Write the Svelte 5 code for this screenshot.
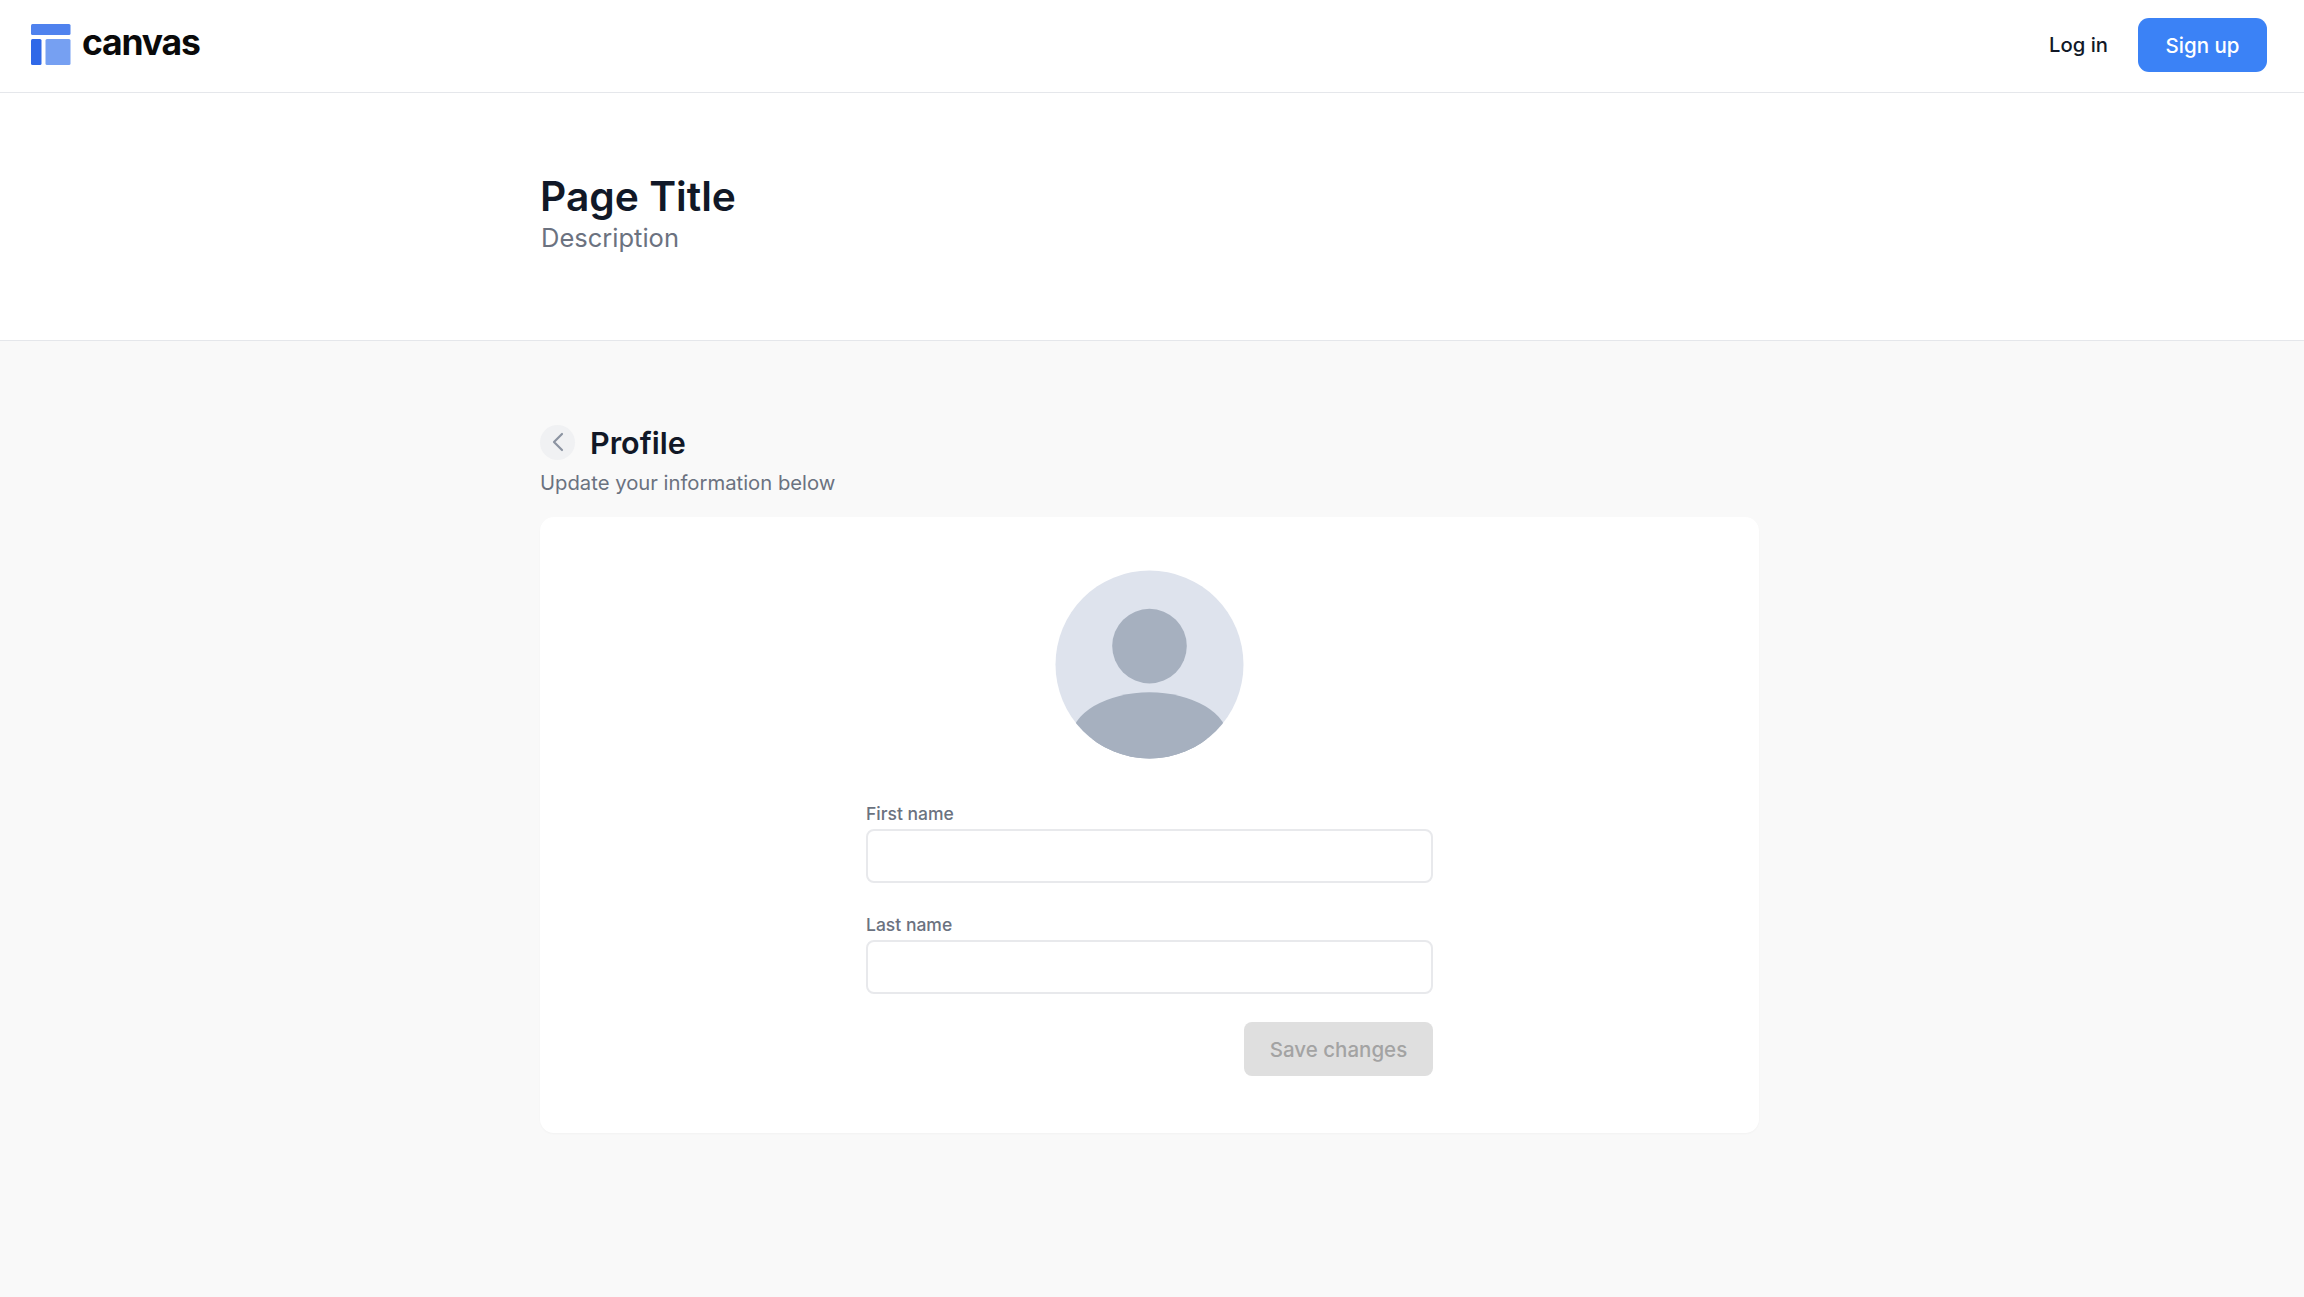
<script>
  let firstName = $state('')
  let lastName = $state('')
</script>

<header class="topbar">
  <div class="brand">
    <svg class="logo" viewBox="0 0 40 41" width="40" height="41">
      <rect x="0" y="0" width="39.500" height="11" rx="1.500" fill="#4f82ee" />
      <rect x="0" y="15" width="10.500" height="26" rx="1.500" fill="#2f68e8" />
      <rect x="14.500" y="15" width="25" height="26" rx="1.500" fill="#76a0f2" />
    </svg>
    <span class="wordmark">canvas</span>
  </div>
  <nav class="auth">
    <button class="login">Log in</button>
    <button class="signup">Sign up</button>
  </nav>
</header>

<section class="page-head">
  <div class="wrap">
    <h1>Page Title</h1>
    <p>Description</p>
  </div>
</section>

<main class="content">
  <div class="wrap">
    <div class="section-title">
      <button class="back" aria-label="Back">
        <svg viewBox="0 0 12 20" width="12" height="20" fill="none" stroke="#8b93a1" stroke-width="2.200" stroke-linecap="round" stroke-linejoin="round">
          <path d="M10 2 2 10l8 8" />
        </svg>
      </button>
      <h2>Profile</h2>
    </div>
    <p class="hint">Update your information below</p>

    <div class="card">
      <svg class="avatar" viewBox="0 0 190 190" width="189" height="189">
        <defs>
          <clipPath id="avatar-clip"><circle cx="95" cy="95" r="94.500" /></clipPath>
        </defs>
        <circle cx="95" cy="95" r="94.500" fill="#dee3ed" />
        <g clip-path="url(#avatar-clip)" fill="#a6b0bf">
          <circle cx="95" cy="76.500" r="37.500" />
          <ellipse cx="95" cy="170" rx="79" ry="47" />
          <rect x="0" y="170" width="190" height="20" />
        </g>
      </svg>

      <form class="form" onsubmit={(e) => e.preventDefault()}>
        <label>
          <span>First name</span>
          <input type="text" bind:value={firstName} />
        </label>
        <label class="next">
          <span>Last name</span>
          <input type="text" bind:value={lastName} />
        </label>
        <div class="actions">
          <button class="save" disabled>Save changes</button>
        </div>
      </form>
    </div>
  </div>
</main>

<style>
  :global(body) {
    margin: 0;
    background: #f9f9f9;
    font-family: Inter, "Liberation Sans", sans-serif;
    color: #111827;
  }
  button {
    font-family: inherit;
    border: 0;
    padding: 0;
    background: none;
  }
  .topbar {
    height: 93px;
    box-sizing: border-box;
    padding: 0 37px 0 31px;
    display: flex;
    align-items: center;
    justify-content: space-between;
    background: #fff;
    border-bottom: 1px solid #e5e7eb;
  }
  .brand {
    display: flex;
    align-items: center;
    gap: 11px;
    margin-top: -3px;
  }
  .wordmark {
    font-size: 35.500px;
    font-weight: 700;
    letter-spacing: -1.200px;
    color: #0a0a0a;
    line-height: 1;
    margin-top: -4px;
  }
  .auth {
    display: flex;
    align-items: center;
    gap: 30px;
    margin-top: -2px;
  }
  .login {
    font-size: 20.250px;
    font-weight: 500;
    color: #111827;
    margin-top: -2px;
  }
  .signup {
    width: 129px;
    height: 54px;
    border-radius: 11px;
    background: #3b82f6;
    color: #fff;
    font-size: 20.500px;
    font-weight: 500;
  }
  .wrap {
    width: 1219px;
    margin-left: 540px;
  }
  .page-head {
    height: 248px;
    background: #fff;
    border-bottom: 1px solid #e5e7eb;
    box-sizing: border-box;
    padding-top: 80px;
  }
  h1 {
    margin: 0;
    font-size: 40.750px;
    font-weight: 600;
    line-height: 47px;
    color: #111827;
  }
  .page-head p {
    margin: 0 0 0 1px;
    font-size: 25.500px;
    line-height: 35px;
    color: #6b7280;
  }
  .content {
    padding-top: 83px;
    min-height: 873px;
    box-sizing: border-box;
  }
  .section-title {
    display: flex;
    align-items: center;
    gap: 15px;
    height: 36px;
  }
  .back {
    width: 35px;
    height: 35px;
    border-radius: 50%;
    background: #f0f1f3;
    display: flex;
    align-items: center;
    justify-content: center;
    padding-left: 1px;
    box-sizing: border-box;
  }
  .back svg {
    margin-top: -1px;
  }
  h2 {
    margin: 2px 0 0;
    font-size: 30.500px;
    font-weight: 600;
    line-height: 36px;
    color: #111827;
  }
  .hint {
    margin: 9px 0 0;
    font-size: 20.250px;
    line-height: 27px;
    color: #6b7280;
  }
  .card {
    margin-top: 21px;
    height: 616px;
    box-sizing: border-box;
    padding-top: 53px;
    background: #fff;
    border-radius: 14px;
    box-shadow: 0 1px 2px rgba(0, 0, 0, 0.03);
    display: flex;
    flex-direction: column;
    align-items: center;
  }
  .avatar {
    display: block;
    flex: none;
  }
  .form {
    width: 567px;
    margin-top: 43px;
    display: flex;
    flex-direction: column;
    gap: 28px;
  }
  label {
    display: flex;
    flex-direction: column;
    gap: 3px;
  }
  .next {
    margin-top: 2px;
  }
  label span {
    font-size: 17.500px;
    font-weight: 500;
    line-height: 24px;
    color: #6b7280;
  }
  input {
    height: 54px;
    box-sizing: border-box;
    border: 2px solid #e8e9ec;
    border-radius: 8px;
    background: #fff;
    padding: 0 14px;
    font-family: inherit;
    font-size: 20px;
    outline: none;
  }
  .actions {
    display: flex;
    justify-content: flex-end;
  }
  .save {
    width: 189px;
    height: 54px;
    border-radius: 8px;
    background: #dfdfdf;
    color: #a3a3a3;
    font-size: 20.500px;
    font-weight: 500;
  }
</style>
